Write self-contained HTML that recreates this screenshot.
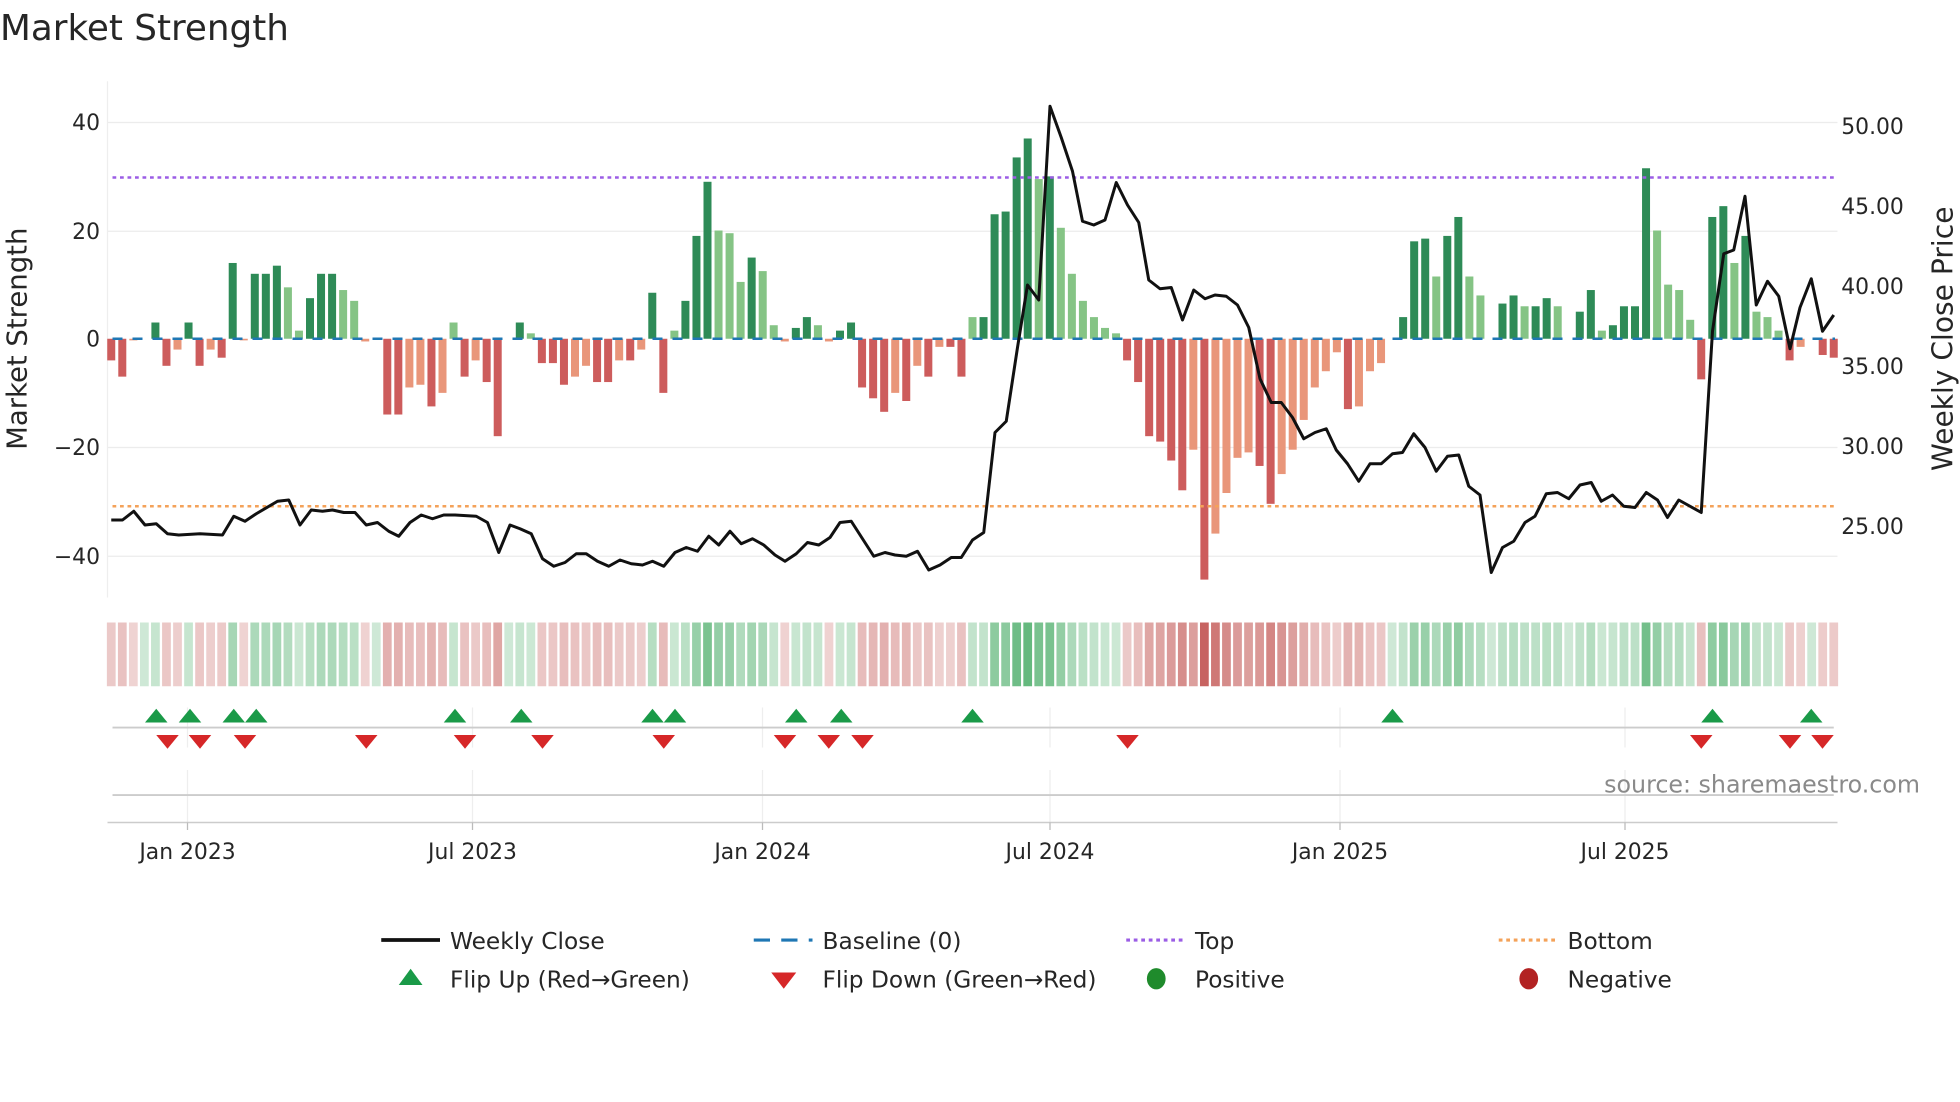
<!DOCTYPE html>
<html><head><meta charset="utf-8"><style>
html,body{margin:0;padding:0;background:#fff;}
svg{display:block}
text{font-family:"DejaVu Sans","Liberation Sans",sans-serif;fill:#262626}
</style></head><body>
<svg id="s" width="1960" height="1102" viewBox="0 0 1568 881.6" xmlns="http://www.w3.org/2000/svg">
<text x="0" y="32" font-size="28.6">Market Strength</text>
<g stroke="#ececec" stroke-width="1">
<line x1="86" x2="1470" y1="98" y2="98"/><line x1="86" x2="1470" y1="185" y2="185"/>
<line x1="86" x2="1470" y1="358" y2="358"/><line x1="86" x2="1470" y1="445" y2="445"/>
</g>
<line x1="86" x2="86" y1="65" y2="478" stroke="#eee"/>
<g font-size="17.5" text-anchor="end">
<text x="80" y="104">40</text><text x="80" y="191">20</text><text x="80" y="277">0</text>
<text x="80" y="364">−20</text><text x="80" y="451">−40</text>
</g>
<g font-size="17.5">
<text x="1473" y="107">50.00</text><text x="1473" y="171">45.00</text><text x="1473" y="235">40.00</text>
<text x="1473" y="299">35.00</text><text x="1473" y="363">30.00</text><text x="1473" y="427">25.00</text>
</g>
<text font-size="22" transform="translate(21,271) rotate(-90)" text-anchor="middle">Market Strength</text>
<text font-size="22.5" transform="translate(1562,271) rotate(-90)" text-anchor="middle">Weekly Close Price</text>
<g id="bars"></g>
<line x1="90" x2="1468" y1="271" y2="271" stroke="#1f77b4" stroke-width="2" stroke-dasharray="8,8"/>
<line x1="90" x2="1468" y1="142" y2="142" stroke="#9b5de5" stroke-width="2" stroke-dasharray="3,3"/>
<line x1="90" x2="1468" y1="405" y2="405" stroke="#f4a259" stroke-width="2" stroke-dasharray="3,3"/>
<polyline id="price" fill="none" stroke="#111" stroke-width="2.4" stroke-linejoin="round"/>
<g id="strip"></g>
<g stroke="#eee" stroke-width="1">
<line x1="150" x2="150" y1="566" y2="598"/><line x1="378" x2="378" y1="566" y2="598"/><line x1="610" x2="610" y1="566" y2="598"/><line x1="840" x2="840" y1="566" y2="598"/><line x1="1072" x2="1072" y1="566" y2="598"/><line x1="1300" x2="1300" y1="566" y2="598"/>
<line x1="150" x2="150" y1="616" y2="658"/><line x1="378" x2="378" y1="616" y2="658"/><line x1="610" x2="610" y1="616" y2="658"/><line x1="840" x2="840" y1="616" y2="658"/><line x1="1072" x2="1072" y1="616" y2="658"/><line x1="1300" x2="1300" y1="616" y2="658"/>
</g>
<line x1="90" x2="1467" y1="582" y2="582" stroke="#ccc" stroke-width="1.5"/>
<line x1="90" x2="1467" y1="636" y2="636" stroke="#ccc" stroke-width="1.5"/>
<line x1="86" x2="1470" y1="658" y2="658" stroke="#ccc" stroke-width="1.2"/>
<g id="marks"></g>
<text x="1536" y="634" font-size="19" text-anchor="end" style="fill:#8a8a8a">source: sharemaestro.com</text>
<g stroke="#bbb"><line x1="150" x2="150" y1="658" y2="664"/><line x1="378" x2="378" y1="658" y2="664"/><line x1="610" x2="610" y1="658" y2="664"/><line x1="840" x2="840" y1="658" y2="664"/><line x1="1072" x2="1072" y1="658" y2="664"/><line x1="1300" x2="1300" y1="658" y2="664"/></g>
<g font-size="17.5" text-anchor="middle">
<text x="150" y="687">Jan 2023</text><text x="378" y="687">Jul 2023</text><text x="610" y="687">Jan 2024</text><text x="840" y="687">Jul 2024</text><text x="1072" y="687">Jan 2025</text><text x="1300" y="687">Jul 2025</text>
</g>
<g font-size="18.6">
<line x1="305" x2="352" y1="752" y2="752" stroke="#111" stroke-width="3"/><text x="360" y="759">Weekly Close</text>
<line x1="603" x2="650" y1="752" y2="752" stroke="#1f77b4" stroke-width="2.5" stroke-dasharray="13,9"/><text x="658" y="759">Baseline (0)</text>
<line x1="901" x2="946" y1="752" y2="752" stroke="#9b5de5" stroke-width="2.5" stroke-dasharray="3,3"/><text x="956" y="759">Top</text>
<line x1="1199" x2="1244" y1="752" y2="752" stroke="#f4a259" stroke-width="2.5" stroke-dasharray="3,3"/><text x="1254" y="759">Bottom</text>
<polygon points="319,788 338,788 328.5,775" fill="#1a9a48"/><text x="360" y="790">Flip Up (Red→Green)</text>
<polygon points="617,778 637,778 627,791" fill="#d62728"/><text x="658" y="790">Flip Down (Green→Red)</text>
<ellipse cx="925" cy="783" rx="7.5" ry="8.5" fill="#1f8b2c"/><text x="956" y="790">Positive</text>
<ellipse cx="1223" cy="783" rx="7.5" ry="8.5" fill="#b22222"/><text x="1254" y="790">Negative</text>
</g>
</svg>
<script>
var v=[-4,-7,-0.3,0,3,-5,-2,3,-5,-2,-3.5,14,-0.3,12,12,13.5,9.5,1.5,7.5,12,12,9,7,-0.5,0,-14,-14,-9,-8.5,-12.5,-10,3,-7,-4,-8,-18,0,3,1,-4.5,-4.5,-8.5,-7,-5,-8,-8,-4,-4,-2,8.5,-10,1.5,7,19,29,20,19.5,10.5,15,12.5,2.5,-0.5,2,4,2.5,-0.5,1.5,3,-9,-11,-13.5,-10,-11.5,-5,-7,-1.5,-1.5,-7,4,4,23,23.5,33.5,37,29.5,30,20.5,12,7,4,2,1,-4,-8,-18,-19,-22.5,-28,-20.5,-44.5,-36,-28.5,-22,-21,-23.5,-30.5,-25,-20.5,-15,-9,-6,-2.5,-13,-12.5,-6,-4.5,0,4,18,18.5,11.5,19,22.5,11.5,8,0,6.5,8,6,6,7.5,6,0,5,9,1.5,2.5,6,6,31.5,20,10,9,3.5,-7.5,22.5,24.5,14,19,5,4,1.5,-4,-1.5,0,-3,-3.5];
var N=v.length,x0=89,dx=(1467-89)/(N-1),b="",st="";
for(var i=0;i<N;i++){var x=x0+i*dx,a=v[i],h=Math.abs(a)*4.33,prev=i?v[i-1]:0;
var strong=Math.abs(a)>=Math.abs(prev);var c;
if(a>=0)c=strong?"#2e8b57":"#85c485";else c=strong?"#cd5c5c":"#e9967a";
if(h>0.3)b+='<rect x="'+(x-3.2)+'" y="'+(a>=0?271-h:271)+'" width="6.4" height="'+h+'" fill="'+c+'"/>';
var al=0.25+0.65*Math.min(Math.abs(a),45)/45;
st+='<rect x="'+(x-3.5)+'" y="498" width="7" height="51" fill="'+(a>=0?"#3aa55a":"#c0504d")+'" fill-opacity="'+al.toFixed(2)+'"/>';}
document.getElementById("bars").innerHTML=b;document.getElementById("strip").innerHTML=st;
var p=[[89,416],[98,416],[107,409],[116,420],[125,419],[134,427],[143,428],[160,427],[178,428],[187,413],[196,417],[205,411],[222,401],[231,400],[240,420],[249,408],[258,409],[266,408],[275,410],[284,410],[293,420],[302,418],[311,425],[319,429],[328,418],[337,412],[346,415],[355,412],[364,412],[381,413],[390,418],[399,442],[408,420],[416,423],[425,427],[434,447],[443,453],[452,450],[461,443],[469,443],[478,449],[487,453],[496,448],[505,451],[514,452],[522,449],[531,453],[540,442],[549,438],[558,441],[567,429],[575,436],[584,425],[593,435],[602,431],[611,436],[620,444],[628,449],[637,443],[646,434],[655,436],[664,430],[672,418],[681,417],[690,431],[699,445],[708,442],[716,444],[725,445],[734,441],[743,456],[752,452],[761,446],[769,446],[778,432],[787,426],[796,346],[805,337],[814,278],[822,228],[831,240],[840,85],[849,110],[858,137],[866,177],[875,180],[884,176],[893,146],[902,164],[911,178],[919,224],[928,231],[937,230],[946,256],[955,232],[964,239],[972,236],[981,237],[990,244],[999,262],[1008,303],[1017,322],[1025,322],[1034,334],[1043,351],[1052,346],[1061,343],[1069,360],[1078,371],[1087,385],[1096,371],[1105,371],[1114,363],[1122,362],[1131,347],[1140,358],[1149,377],[1158,365],[1167,364],[1175,389],[1184,396],[1193,458],[1202,438],[1211,433],[1220,418],[1228,413],[1237,395],[1246,394],[1255,399],[1264,388],[1273,386],[1281,401],[1290,396],[1299,405],[1308,406],[1317,394],[1326,400],[1334,414],[1343,400],[1352,405],[1361,410],[1370,265],[1379,203],[1387,200],[1396,157],[1405,244],[1414,225],[1423,237],[1432,279],[1440,246],[1449,223],[1458,265],[1467,252]];
document.getElementById("price").setAttribute("points",p.map(function(q){return q.join(",")}).join(" "));
var up=[125,152,187,205,364,417,522,540,637,673,778,1114,1370,1449],dn=[134,160,196,293,372,434,531,628,663,690,902,1361,1432,1458],m="";
up.forEach(function(x){m+='<polygon points="'+(x-9)+',578 '+(x+9)+',578 '+x+',567" fill="#1a9a48"/>'});
dn.forEach(function(x){m+='<polygon points="'+(x-9)+',588 '+(x+9)+',588 '+x+',599" fill="#d62728"/>'});
document.getElementById("marks").innerHTML=m;
</script>
</body></html>
